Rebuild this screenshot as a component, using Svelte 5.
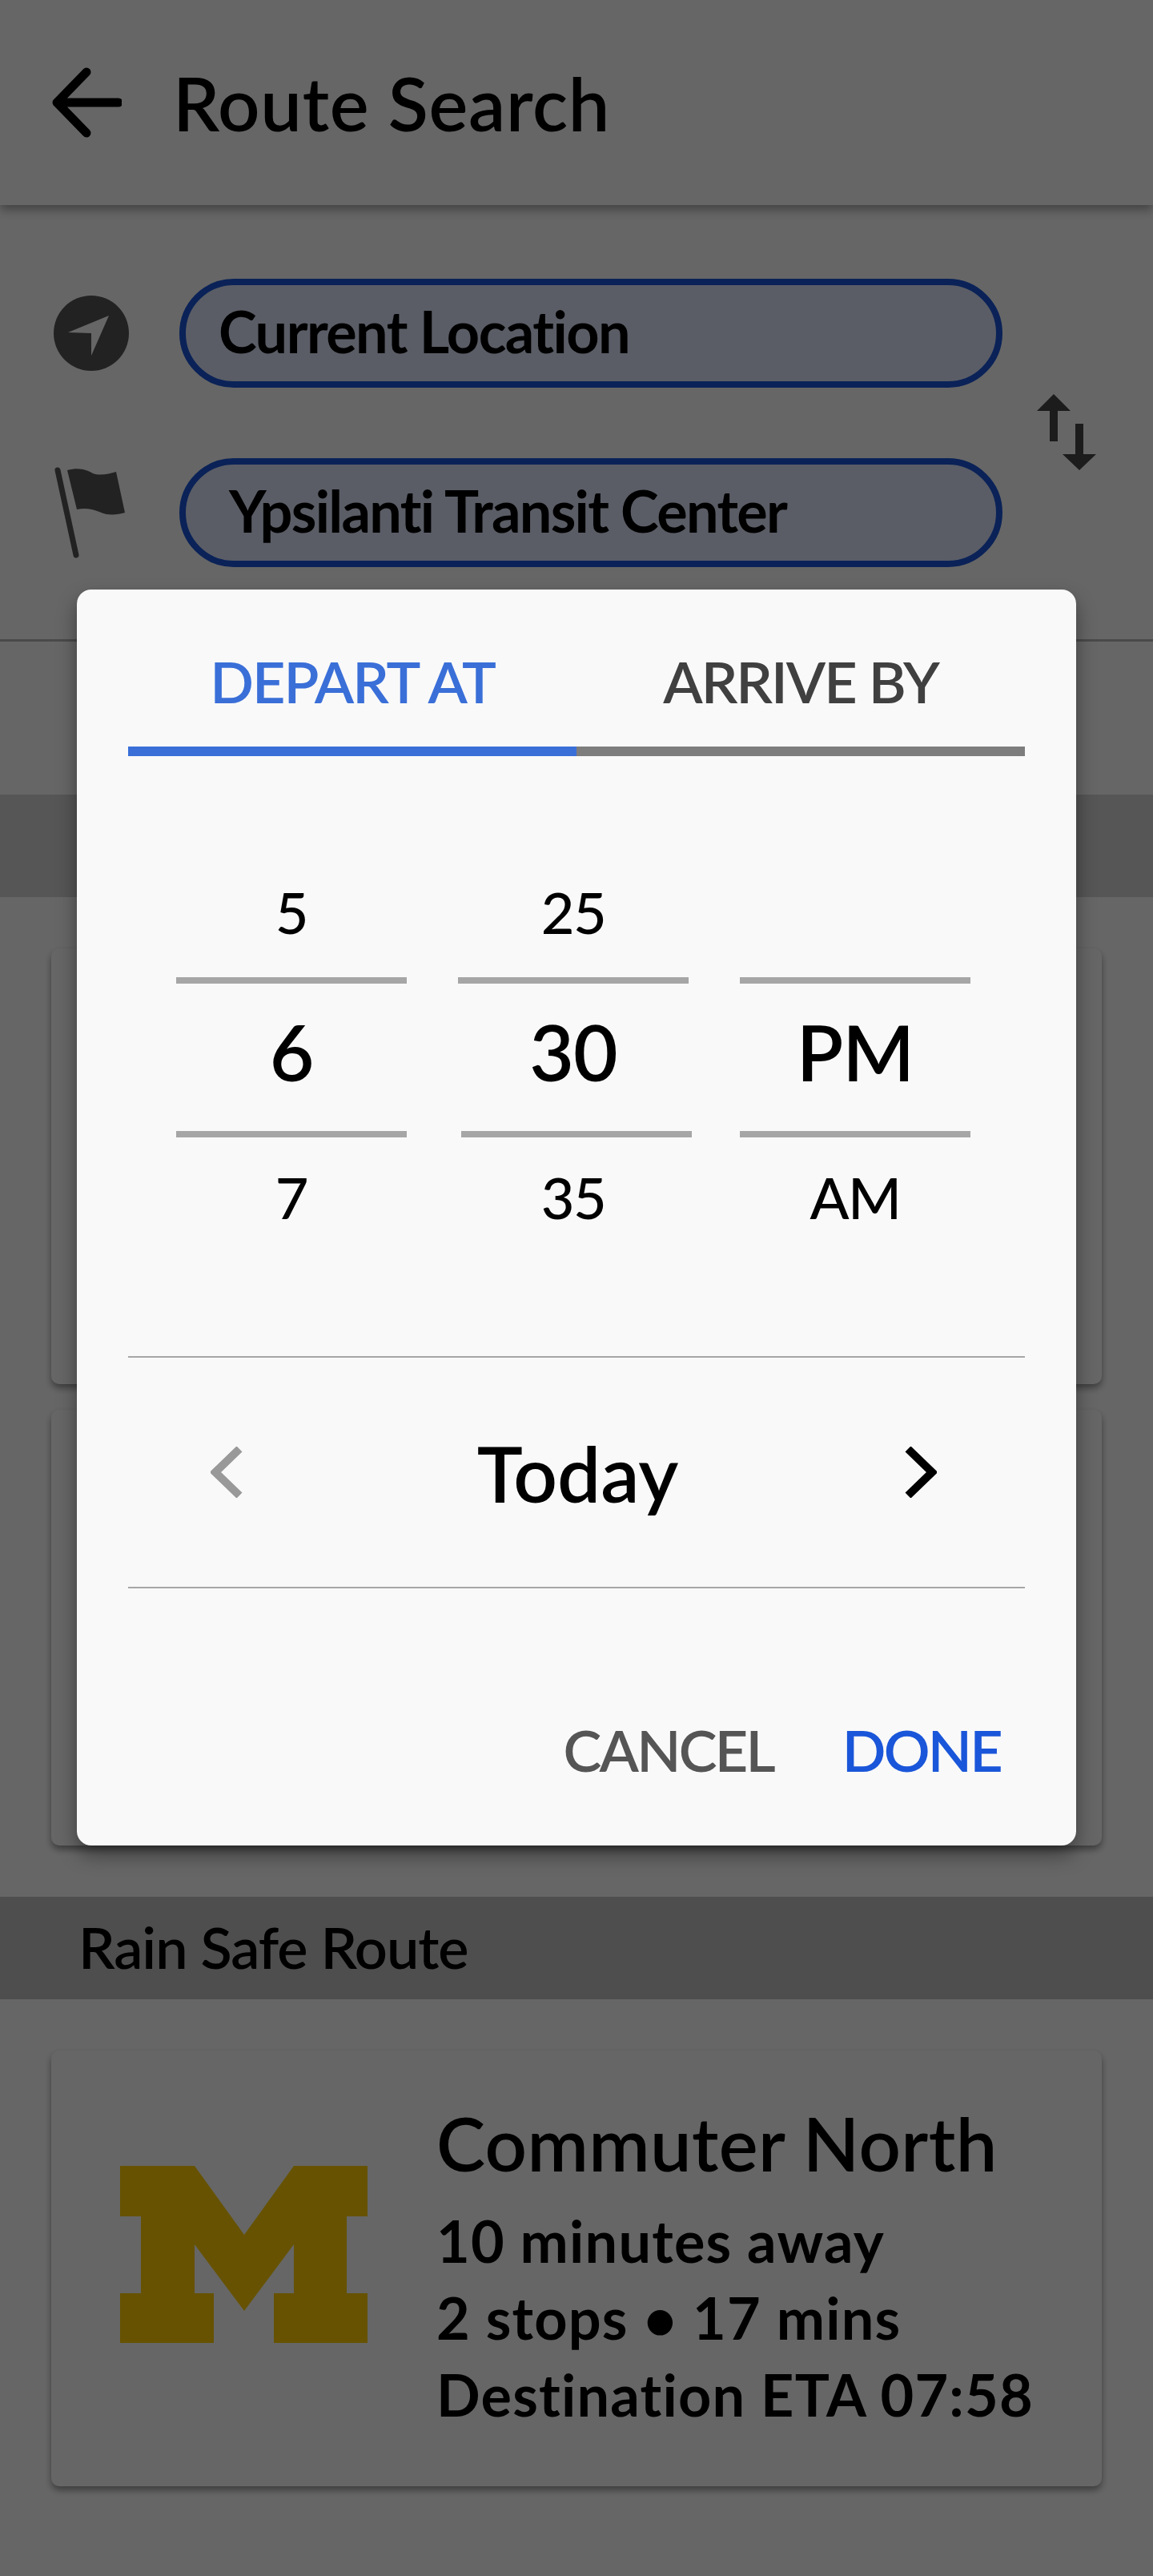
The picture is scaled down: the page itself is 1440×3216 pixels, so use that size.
<script>
  const wheels = [
    { prev: '5', cur: '6', next: '7' },
    { prev: '25', cur: '30', next: '35', shifted: true },
    { prev: '', cur: 'PM', next: 'AM' }
  ];

  const cards = [
    { name: 'Commuter North', lines: ['10 minutes away', '2 stops • 17 mins', 'Destination ETA 07:58'] }
  ];
</script>

<div class="page">
  <header class="topbar">
    <svg class="back" width="88" height="88" viewBox="0 0 88 88" aria-hidden="true">
      <path d="M44 6 L7 44 L44 82 M7 44 H84" />
    </svg>
    <h1>Route Search</h1>
  </header>

  <section class="search">
    <div class="fields">
      <div class="field">
        <svg class="icon" width="94" height="94" viewBox="67 367 94 94" aria-hidden="true">
          <circle cx="114" cy="414" r="47" fill="#555" />
          <path d="M85 413 L136 392 L114 442 L114 414 Z" fill="#fff" />
        </svg>
        <div class="pill">Current Location</div>
      </div>
      <div class="field">
        <svg class="icon flag" width="100" height="120" viewBox="64 580 100 120" aria-hidden="true">
          <path d="M72 587 L95 693" stroke="#555" stroke-width="7" stroke-linecap="round" fill="none" />
          <path d="M84 587 C100 583 108 587 116 591 C124 594 136 592 145 589 L156 640 C146 643 134 644 124 639 C114 635 106 634 96 636 Z" fill="#555" />
        </svg>
        <div class="pill pill-dest">Ypsilanti Transit Center</div>
      </div>
    </div>
    <svg class="swap" width="74" height="95" viewBox="1295 492 74 95" aria-hidden="true">
      <path d="M1316 492 L1337 513 L1321 513 L1321 551 L1311 551 L1311 513 L1295 513 Z" />
      <path d="M1348 587 L1369 567 L1353 567 L1353 529 L1343 529 L1343 567 L1327 567 Z" />
    </svg>
  </section>

  <div class="band band-top"></div>

  <div class="cards">
    <div class="card"></div>
    <div class="card"></div>
  </div>

  <div class="band band-rain">Rain Safe Route</div>

  <div class="cards cards-rain">
    {#each cards as card}
      <div class="card route">
        <svg class="logo" width="310" height="222" viewBox="150 2704 310 222" aria-hidden="true">
          <path d="M150 2704 H243 L305 2790 L367 2704 H459 V2767 H433 V2863 H459 V2925 H342 V2863 H367 V2802 L305 2885 L243 2802 V2863 H267 V2925 H150 V2863 H176 V2767 H150 Z" fill="#ffcd00" />
        </svg>
        <div class="info">
          <h2>{card.name}</h2>
          {#each card.lines as line}
            <p>{line}</p>
          {/each}
        </div>
      </div>
    {/each}
  </div>

  <div class="scrim"></div>

  <div class="modal">
    <div class="tabs">
      <div class="tab active">DEPART AT</div>
      <div class="tab">ARRIVE BY</div>
    </div>

    <div class="wheels">
      {#each wheels as w}
        <div class="wheel">
          <div class="opt">{w.prev}</div>
          <div class="rule"></div>
          <div class="cur">{w.cur}</div>
          <div class="rule" class:shifted={w.shifted}></div>
          <div class="opt">{w.next}</div>
        </div>
      {/each}
    </div>

    <div class="date">
      <svg width="40" height="64" viewBox="0 0 40 64" aria-hidden="true">
        <path d="M36 3 L6 32 L36 61" stroke="#999" />
      </svg>
      <span>Today</span>
      <svg width="40" height="64" viewBox="0 0 40 64" aria-hidden="true">
        <path d="M4 3 L34 32 L4 61" stroke="#000" />
      </svg>
    </div>

    <div class="actions">
      <button class="cancel">CANCEL</button>
      <button class="done">DONE</button>
    </div>
  </div>
</div>

<style>
  :global(body) { margin: 0; }

  .page {
    position: relative;
    width: 1440px;
    height: 3216px;
    overflow: hidden;
    background: #fff;
    color: #000;
    font-family: Lato, "Noto Sans", sans-serif;
    font-variant-ligatures: none;
  }

  .topbar {
    height: 256px;
    display: flex;
    align-items: center;
    padding-left: 64px;
    box-shadow: 0 6px 12px rgba(0, 0, 0, .35);
  }
  .back { fill: none; stroke: #000; stroke-width: 11; stroke-linecap: round; stroke-linejoin: round; }
  h1 {
    margin: 0 0 0 64px;
    font-size: 92px;
    font-weight: 600;
    letter-spacing: .7px;
  }

  .search {
    height: 545px;
    box-sizing: border-box;
    padding: 92px 0 0 64px;
    display: flex;
    border-bottom: 3px solid #b8b8b8;
  }
  .fields { display: flex; flex-direction: column; gap: 88px; }
  .field { display: flex; align-items: center; height: 136px; }
  .icon { margin: 0 63px 0 3px; }
  .icon.flag { margin: 0 60px 0 0; }
  .pill {
    width: 1028px;
    height: 136px;
    box-sizing: border-box;
    border: 8px solid #1a56d9;
    border-radius: 68px;
    background: #e2e8ff;
    padding-left: 41px;
    font-size: 72px;
    font-weight: 700;
    line-height: 114px;
    letter-spacing: -1.55px;
  }
  .pill-dest { padding-left: 54px; letter-spacing: -1.7px; }
  .swap { fill: #474747; margin: 144px 0 0 43px; }

  .band { height: 128px; }
  .band-top { margin-top: 191px; background: #d7d7d7; }
  .band-rain {
    margin-top: 64px;
    background: #c3c3c3;
    padding-left: 98px;
    font-size: 72px;
    font-weight: 600;
    line-height: 124px;
    letter-spacing: -1px;
  }

  .cards {
    margin-top: 64px;
    padding: 0 64px;
    display: flex;
    flex-direction: column;
    gap: 32px;
  }
  .card {
    height: 544px;
    border-radius: 10px;
    background: #fff;
    box-shadow: 0 5px 8px rgba(0, 0, 0, .4);
  }
  .route { display: flex; align-items: center; }
  .logo { margin: -34px 85px 0 86px; flex: none; }
  .info { margin-top: -7px; }
  h2 { margin: 0 0 18px; font-size: 92px; font-weight: 600; line-height: 110px; letter-spacing: .4px; }
  .info p { margin: 0; font-size: 72px; font-weight: 700; line-height: 96px; letter-spacing: 1.2px; }

  .scrim { position: absolute; inset: 0; background: rgba(0, 0, 0, .6); }

  .modal {
    position: absolute;
    left: 96px;
    top: 736px;
    width: 1248px;
    height: 1568px;
    box-sizing: border-box;
    padding: 0 64px;
    border-radius: 18px;
    background: #f9f9f9;
    box-shadow: 0 12px 24px rgba(0, 0, 0, .4);
    display: flex;
    flex-direction: column;
  }

  .tabs { display: flex; height: 208px; }
  .tab {
    flex: 1;
    box-sizing: border-box;
    border-bottom: 12px solid #7d7d7d;
    text-align: center;
    padding-top: 71px;
    font-size: 72px;
    line-height: 86px;
    color: #404040;
    font-weight: 600;
    letter-spacing: -2px;
  }
  .tab.active { color: #3a6fd8; border-color: #3a6fd8; }

  .wheels {
    display: flex;
    gap: 64px;
    margin-top: 148px;
    padding-left: 60px;
  }
  .wheel { width: 288px; text-align: center; }
  .opt { height: 96px; line-height: 92px; font-size: 72px; font-weight: 500; margin-bottom: 32px; letter-spacing: -1.5px; }
  .opt:last-child { margin: 32px 0 0; line-height: 84px; }
  .rule { height: 8px; background: #a6a6a6; }
  .rule.shifted { transform: translateX(4px); }
  .cur { height: 184px; line-height: 170px; font-size: 96px; font-weight: 600; letter-spacing: -1px; }

  .date {
    margin-top: 145px;
    height: 290px;
    box-sizing: border-box;
    border-top: 2px solid #a6a6a6;
    border-bottom: 2px solid #a6a6a6;
    display: flex;
    align-items: center;
    justify-content: space-between;
    padding: 0 110px 0 103px;
    font-size: 96px;
    font-weight: 600;
  }
  .date span { margin-left: 10px; }
  .date svg { fill: none; stroke-width: 10; }

  .actions {
    margin-top: 158px;
    display: flex;
    justify-content: flex-end;
    gap: 86px;
    padding-right: 30px;
  }
  button {
    border: 0;
    padding: 0;
    background: none;
    font: inherit;
    font-size: 72px;
    font-weight: 600;
    line-height: 86px;
    letter-spacing: -2.8px;
  }
  .cancel { color: #555; }
  .done { color: #1a56d9; }
</style>
